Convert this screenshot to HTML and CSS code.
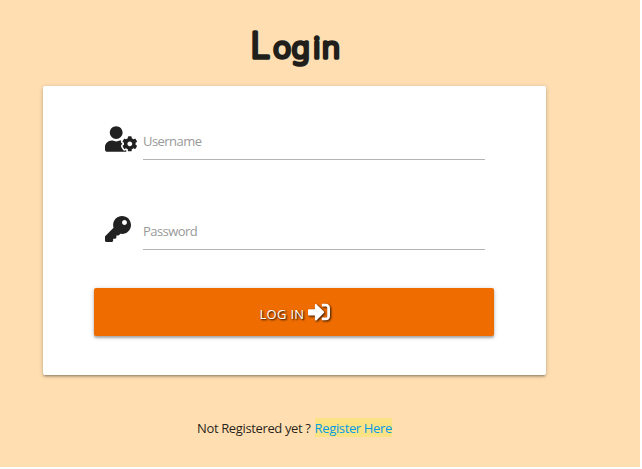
FILE: index.html
```html
<!DOCTYPE html>
<html lang="en">
<head>
<meta charset="utf-8">
<title>Login</title>
<link rel="stylesheet" href="styles.css">
</head>
<body>
<main class="page">
  <h1 class="title"><svg class="title-art" viewBox="0 0 110 60"><text x="10.4 33.3 51.8 73.3 82" y="37.5"><tspan class="initial">L</tspan>ogin</text></svg></h1>
  <form class="card">
    <div class="field">
      <svg class="icon icon-user" viewBox="0 0 640 512"><path d="M610.5 373.3c2.6-14.1 2.6-28.5 0-42.6l25.8-14.9c3-1.7 4.3-5.2 3.3-8.5-6.7-21.6-18.2-41.2-33.2-57.4-2.3-2.5-6-3.1-9-1.4l-25.8 14.9c-10.9-9.3-23.4-16.5-36.9-21.3v-29.8c0-3.4-2.4-6.4-5.7-7.1-22.3-5-45-4.8-66.2 0-3.3.7-5.7 3.7-5.7 7.1v29.8c-13.5 4.8-26 12-36.9 21.3l-25.8-14.9c-2.9-1.7-6.7-1.1-9 1.4-15 16.2-26.5 35.8-33.2 57.4-1 3.3.4 6.8 3.3 8.5l25.8 14.9c-2.6 14.1-2.6 28.5 0 42.6l-25.8 14.9c-3 1.7-4.3 5.2-3.3 8.5 6.7 21.6 18.2 41.1 33.2 57.4 2.3 2.5 6 3.1 9 1.4l25.8-14.9c10.9 9.3 23.4 16.5 36.9 21.3v29.8c0 3.4 2.4 6.4 5.7 7.1 22.3 5 45 4.8 66.2 0 3.3-.7 5.7-3.7 5.7-7.1v-29.8c13.5-4.8 26-12 36.9-21.3l25.8 14.9c2.9 1.7 6.7 1.1 9-1.4 15-16.2 26.5-35.8 33.2-57.4 1-3.3-.4-6.8-3.3-8.5l-25.8-14.9zM496 400.5c-26.8 0-48.5-21.8-48.5-48.5s21.8-48.5 48.5-48.5 48.5 21.8 48.5 48.5-21.7 48.5-48.5 48.5zM224 256c70.7 0 128-57.3 128-128S294.7 0 224 0 96 57.3 96 128s57.3 128 128 128zm201.2 226.5c-2.3-1.2-4.6-2.6-6.8-3.9l-7.9 4.6c-6 3.4-12.8 5.3-19.6 5.3-10.9 0-21.4-4.6-28.9-12.6-18.3-19.8-32.3-43.9-40.2-69.6-5.5-17.7 1.9-36.4 17.9-45.7l7.9-4.6c-.1-2.6-.1-5.2 0-7.8l-7.9-4.6c-16-9.2-23.4-28-17.9-45.7.9-2.9 2.2-5.8 3.2-8.7-3.8-.3-7.5-1.2-11.4-1.2h-16.7c-22.2 10.2-46.9 16-72.9 16s-50.6-5.8-72.9-16h-16.7C60.2 288 0 348.2 0 422.4V464c0 26.5 21.5 48 48 48h352c10.1 0 19.5-3.2 27.2-8.5-1.2-3.8-2-7.7-2-11.8v-9.2z"/></svg>
      <div class="input">Username</div>
    </div>
    <div class="field">
      <svg class="icon icon-key" viewBox="0 0 512 512"><path d="M512 176.001C512 273.203 433.202 352 336 352c-11.22 0-22.19-1.062-32.827-3.069l-24.012 27.014A23.999 23.999 0 0 1 261.223 384H224v40c0 13.255-10.745 24-24 24h-40v40c0 13.255-10.745 24-24 24H24c-13.255 0-24-10.745-24-24v-78.059c0-6.365 2.529-12.47 7.029-16.971l161.802-161.802C163.108 213.814 160 195.271 160 176 160 78.798 238.797.001 335.999 0 433.488-.001 512 78.511 512 176.001zM336 128c0 26.51 21.49 48 48 48s48-21.49 48-48-21.49-48-48-48-48 21.49-48 48z"/></svg>
      <div class="input">Password</div>
    </div>
    <button class="login" type="button"><span class="login-text">LOG IN</span><svg class="icon-enter" viewBox="0 0 512 512"><path d="M416 448h-84c-6.6 0-12-5.4-12-12v-40c0-6.6 5.4-12 12-12h84c17.7 0 32-14.3 32-32V160c0-17.7-14.3-32-32-32h-84c-6.6 0-12-5.4-12-12V76c0-6.6 5.4-12 12-12h84c53 0 96 43 96 96v192c0 53-43 96-96 96zm-47-201L201 79c-15-15-41-4.5-41 17v96H24c-13.3 0-24 10.7-24 24v96c0 13.3 10.7 24 24 24h136v96c0 21.5 26 32 41 17l168-168c9.3-9.4 9.3-24.6 0-34z"/></svg></button>
  </form>
  <p class="register"><span class="question">Not Registered yet ?</span><a class="link">Register Here</a></p>
</main>
</body>
</html>
```
FILE: styles.css
```css
* { box-sizing: border-box; }
body {
  margin: 0;
  background: #fff;
  font-family: "Segoe UI", "Open Sans", "Noto Sans", sans-serif;
  font-size: 13px;
  color: rgba(0, 0, 0, .87);
}
.page {
  width: 640px;
  height: 467px;
  padding: 20px 94px 0 43px;
  background: #ffdfb2;
}
.title {
  display: flex;
  justify-content: center;
  margin: 0;
  height: 66px;
}
.title-art {
  width: 110px;
  height: 60px;
  font-family: "Comic Sans MS", "Noto Sans", sans-serif;
  font-size: 30px;
  font-weight: 300;
  fill: #211f1b;
  stroke: #211f1b;
  stroke-width: 3.6px;
  stroke-linejoin: round;
}
.initial { font-size: 36px; }
.card {
  width: 503px;
  height: 289px;
  padding: 30px 51px 0;
  border-radius: 2px;
  background: #fff;
  box-shadow: 0 2px 2px rgba(0, 0, 0, .14), 0 3px 1px -2px rgba(0, 0, 0, .12), 0 1px 5px rgba(0, 0, 0, .2);
}
.field {
  display: flex;
  align-items: flex-start;
  height: 90px;
  padding: 10px 10px 0 11px;
}
.icon { height: 26px; flex: none; fill: #212121; }
.icon-user { width: 32px; margin-right: 6px; }
.icon-key { width: 26px; margin-right: 12px; }
.input {
  flex: 1;
  height: 34px;
  line-height: 31px;
  border-bottom: 1px solid #b3b3b3;
  font-weight: 400;
  letter-spacing: -.55px;
  color: #999;
}
.login {
  display: flex;
  align-items: center;
  justify-content: center;
  gap: 4px;
  width: 400px;
  height: 48px;
  margin-top: -8px;
  padding: 0 0 0 2px;
  border: 0;
  border-radius: 2px;
  background: #ef6c00;
  box-shadow: 0 2px 2px rgba(0, 0, 0, .24), 0 1px 5px rgba(0, 0, 0, .2);
  color: #fff;
  font: 400 13px "Segoe UI", "Open Sans", sans-serif;
  letter-spacing: .3px;
  text-shadow: 1px 1px 2px #000;
}
.login-text { padding-top: 4px; }
.icon-enter {
  width: 22px;
  height: 22px;
  fill: #fff;
  filter: drop-shadow(1px 1px 1px rgba(0, 0, 0, .8));
}
.register {
  display: flex;
  gap: 4px;
  margin: 43px 0 0 154px;
  line-height: 20px;
  letter-spacing: -.36px;
}
.link { height: 19px; background: #fbe284; color: #039be5; }
```
